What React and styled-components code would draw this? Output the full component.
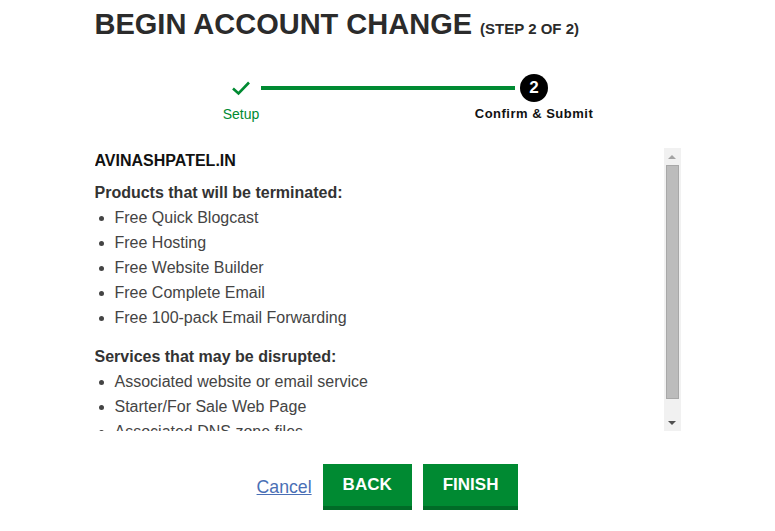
import React from 'react';
import styled, { createGlobalStyle } from 'styled-components';

const GlobalStyle = createGlobalStyle`
    body {
        margin: 0;
        background: #fff;
        font-family: "Liberation Sans", Arial, sans-serif;
    }
`;

const Page = styled.div`
    width: 586px;
    margin: 0 auto;
    padding-top: 6px;
`;

const Title = styled.h1`
    margin: 0;
    font-size: 29px;
    line-height: 36px;
    font-weight: 700;
    color: #2b2b2b;
    white-space: nowrap;
`;

const StepCount = styled.span`
    font-size: 15px;
`;

const Stepper = styled.div`
    display: flex;
    align-items: flex-start;
    width: 321px;
    margin: 27px auto 0;
`;

const Step = styled.div`
    display: flex;
    flex-direction: column;
    align-items: center;
    width: 28px;
    flex: none;
`;

const Icon = styled.div`
    width: 28px;
    height: 28px;
    display: flex;
    align-items: center;
    justify-content: center;
    border-radius: 50%;
    background: ${(p) => (p.active ? '#000' : 'transparent')};
    color: #fff;
    font-weight: 700;
    font-size: 17px;
`;

const Label = styled.div`
    margin-top: 4px;
    white-space: nowrap;
    line-height: 16px;
    font-size: ${(p) => (p.active ? '13px' : '14px')};
    font-weight: ${(p) => (p.active ? 700 : 400)};
    letter-spacing: ${(p) => (p.active ? '0.5px' : '0')};
    color: ${(p) => (p.active ? '#111' : '#008a32')};
`;

const Line = styled.div`
    flex: 1;
    height: 4px;
    margin: 12px 5px 0 6px;
    background: #008a32;
`;

const ScrollBox = styled.div`
    display: flex;
    height: 283px;
    margin-top: 26px;
`;

const Content = styled.div`
    flex: 1;
    overflow: hidden;
    font-size: 16px;
    line-height: 25px;
    color: #444;
`;

const Domain = styled.div`
    font-weight: 700;
    color: #111;
    margin-bottom: 7px;
`;

const SectionTitle = styled.div`
    font-weight: 700;
    color: #333;
    margin-top: ${(p) => (p.gap ? '14px' : '0')};
`;

const List = styled.ul`
    margin: 0;
    padding-left: 20px;
`;

const Track = styled.div`
    width: 17px;
    flex: none;
    background: #f1f1f1;
    display: flex;
    flex-direction: column;
    align-items: center;
`;

const Arrow = styled.div`
    height: 17px;
    display: flex;
    align-items: center;
    justify-content: center;
    &::after {
        content: '';
        border-left: 4px solid transparent;
        border-right: 4px solid transparent;
        ${(p) =>
            p.down
                ? 'border-top: 4px solid #505050;'
                : 'border-bottom: 4px solid #a3a3a3;'}
    }
`;

const Thumb = styled.div`
    width: 13px;
    height: 234px;
    box-sizing: border-box;
    background: #bcbcbc;
    border: 1px solid #a8a8a8;
`;

const Spacer = styled.div`
    flex: 1;
`;

const Actions = styled.div`
    display: flex;
    justify-content: center;
    align-items: center;
    gap: 11px;
    margin-top: 33px;
`;

const CancelLink = styled.a`
    font-size: 17.7px;
    color: #4a6fb5;
    text-decoration: underline;
    cursor: pointer;
`;

const Button = styled.button`
    height: 46px;
    padding: 0 20px;
    border: none;
    border-bottom: 4px solid #006b27;
    background: #008a32;
    color: #fff;
    font-family: "Liberation Sans", Arial, sans-serif;
    font-weight: 700;
    font-size: 17px;
    cursor: pointer;
`;

const products = [
    'Free Quick Blogcast',
    'Free Hosting',
    'Free Website Builder',
    'Free Complete Email',
    'Free 100-pack Email Forwarding',
];

const services = [
    'Associated website or email service',
    'Starter/For Sale Web Page',
    'Associated DNS zone files',
];

const Check = () => (
    <svg width="20" height="16" viewBox="0 0 20 16">
        <path d="M2 8.5 L7.5 13.5 L18 2.5" fill="none" stroke="#008a32" strokeWidth="2.6" />
    </svg>
);

const App = () => {
    return (
        <Page>
            <GlobalStyle />
            <Title>
                BEGIN ACCOUNT CHANGE <StepCount>(STEP 2 OF 2)</StepCount>
            </Title>
            <Stepper>
                <Step>
                    <Icon>
                        <Check />
                    </Icon>
                    <Label>Setup</Label>
                </Step>
                <Line />
                <Step>
                    <Icon active>2</Icon>
                    <Label active>Confirm &amp; Submit</Label>
                </Step>
            </Stepper>
            <ScrollBox>
                <Content>
                    <Domain>AVINASHPATEL.IN</Domain>
                    <SectionTitle>Products that will be terminated:</SectionTitle>
                    <List>
                        {products.map((p) => (
                            <li key={p}>{p}</li>
                        ))}
                    </List>
                    <SectionTitle gap>Services that may be disrupted:</SectionTitle>
                    <List>
                        {services.map((s) => (
                            <li key={s}>{s}</li>
                        ))}
                    </List>
                </Content>
                <Track>
                    <Arrow />
                    <Thumb />
                    <Spacer />
                    <Arrow down />
                </Track>
            </ScrollBox>
            <Actions>
                <CancelLink>Cancel</CancelLink>
                <Button>BACK</Button>
                <Button>FINISH</Button>
            </Actions>
        </Page>
    );
};

export default App;
